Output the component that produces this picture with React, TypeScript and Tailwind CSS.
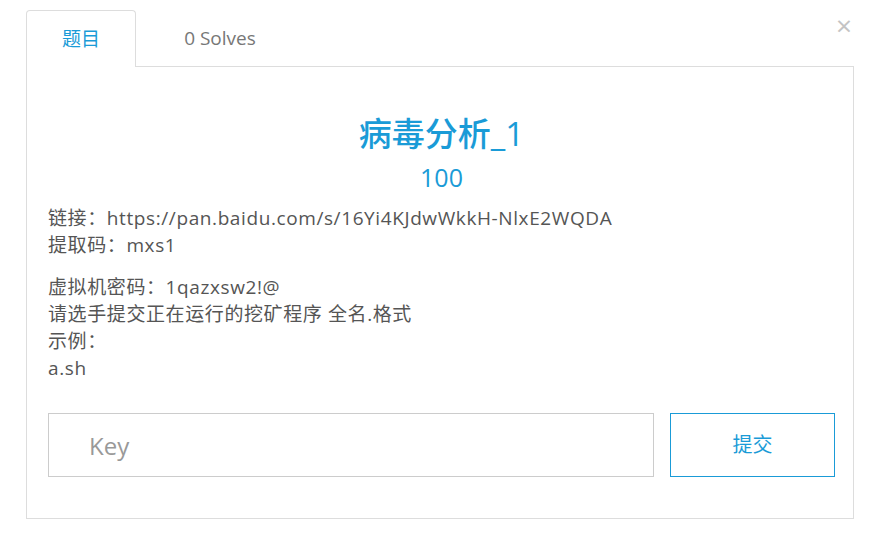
import React, { useState } from "react";

export default function App() {
  const [key, setKey] = useState("");

  return (
    <div
      className="relative w-[881px] h-[541px] bg-white text-[#555]"
      style={{ fontFamily: '"Open Sans", "Noto Sans CJK SC", sans-serif' }}
    >
      <button className="absolute right-[29px] top-[11px] text-[28px] leading-none text-[#c4c4c4]">
        ×
      </button>

      <div className="pt-[10px] px-[26px]">
        {/* tabs */}
        <div className="flex h-[56px]">
          <div className="w-[110px] border border-b-0 border-[#ddd] rounded-t-[4px] bg-white flex items-center justify-center text-[19px] text-[#1a9bd7] relative z-10 -mb-px">
            题目
          </div>
          <div className="w-[168px] flex items-center justify-center text-[19px] text-[#777]">
            0 Solves
          </div>
        </div>

        {/* panel */}
        <div className="w-[828px] h-[453px] border border-[#ddd] pl-[21px] pr-[18px]">
          <div className="text-center mt-[47px]">
            <h3 className="text-[33px] leading-[40px] font-medium text-[#1a9bd7]">
              病毒分析_1
            </h3>
            <h4 className="text-[25px] leading-[34px] text-[#1a9bd7] mt-[6px]">
              100
            </h4>
          </div>

          <div className="mt-[11px] text-[19px] leading-[27px] tracking-[0.6px]">
            <p>链接：https://pan.baidu.com/s/16Yi4KJdwWkkH-NlxE2WQDA</p>
            <p>提取码：mxs1</p>
            <p className="mt-[15px]">虚拟机密码：1qazxsw2!@</p>
            <p>请选手提交正在运行的挖矿程序 全名.格式</p>
            <p>示例：</p>
            <p>a.sh</p>
          </div>

          <div className="flex gap-[16px] mt-[31px]">
            <input
              className="flex-none w-[606px] h-[64px] border border-[#ccc] px-[40px] text-[24px] text-[#555] placeholder:text-[#999] outline-none"
              placeholder="Key"
              value={key}
              onChange={(e) => setKey(e.target.value)}
            />
            <button className="flex-none w-[165px] h-[64px] border border-[#1a9bd7] text-[20px] text-[#1a9bd7] bg-white">
              提交
            </button>
          </div>
        </div>
      </div>
    </div>
  );
}
